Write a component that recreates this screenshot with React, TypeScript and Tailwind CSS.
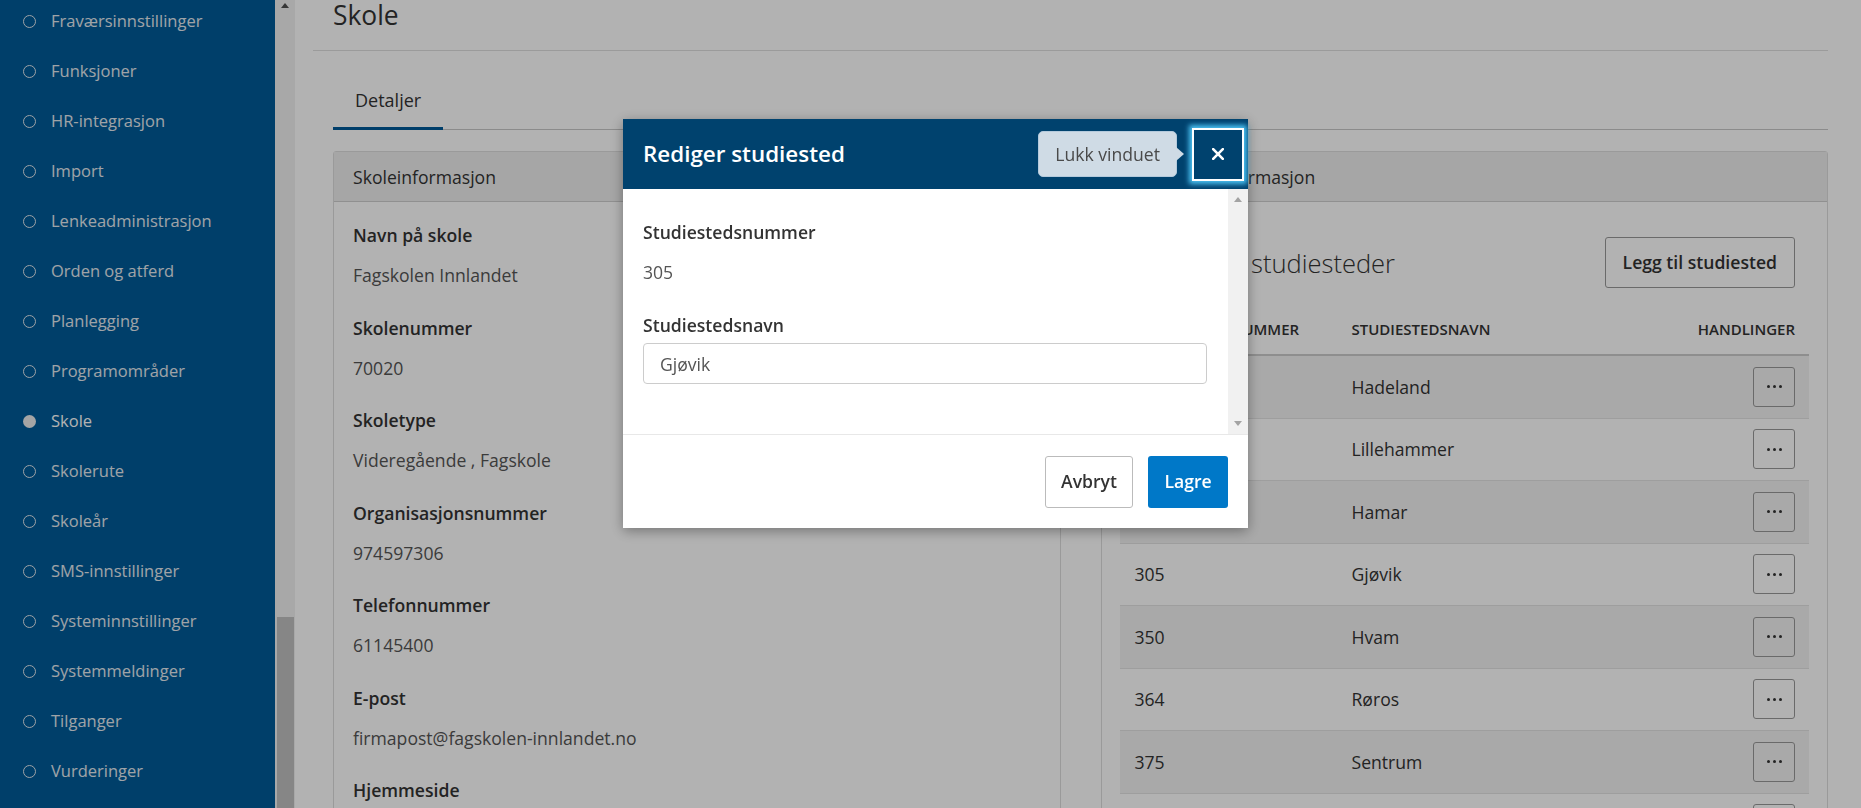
import React from "react";

const menu = [
  "Fraværsinnstillinger",
  "Funksjoner",
  "HR-integrasjon",
  "Import",
  "Lenkeadministrasjon",
  "Orden og atferd",
  "Planlegging",
  "Programområder",
  "Skole",
  "Skolerute",
  "Skoleår",
  "SMS-innstillinger",
  "Systeminnstillinger",
  "Systemmeldinger",
  "Tilganger",
  "Vurderinger",
];

const fields: [string, string][] = [
  ["Navn på skole", "Fagskolen Innlandet"],
  ["Skolenummer", "70020"],
  ["Skoletype", "Videregående , Fagskole"],
  ["Organisasjonsnummer", "974597306"],
  ["Telefonnummer", "61145400"],
  ["E-post", "firmapost@fagskolen-innlandet.no"],
  ["Hjemmeside", "www.fagskolen-innlandet.no"],
];

const rows: [string, string][] = [
  ["301", "Hadeland"],
  ["302", "Lillehammer"],
  ["303", "Hamar"],
  ["305", "Gjøvik"],
  ["350", "Hvam"],
  ["364", "Røros"],
  ["375", "Sentrum"],
  ["380", "Tynset"],
];

function Dots() {
  return (
    <span className="flex items-center gap-[3px]">
      <span className="h-[3px] w-[3px] rounded-full bg-[#333]" />
      <span className="h-[3px] w-[3px] rounded-full bg-[#333]" />
      <span className="h-[3px] w-[3px] rounded-full bg-[#333]" />
    </span>
  );
}

export default function App() {
  return (
    <div className="relative flex h-screen overflow-hidden bg-white font-['Open_Sans',sans-serif] text-[#333]">
      {/* Sidebar */}
      <aside className="flex h-full w-[295px] shrink-0">
        <nav className="mt-[-4px] w-[275px] bg-[#005b99]">
          {menu.map((m) => {
            const active = m === "Skole";
            return (
              <div key={m} className="flex h-[50px] items-center pl-[23px]">
                <span
                  className={
                    active
                      ? "h-[13px] w-[13px] rounded-full bg-[#ececec]"
                      : "h-[13px] w-[13px] rounded-full border-[1.5px] border-[#e4e9ee]"
                  }
                />
                <span
                  className={
                    active
                      ? "ml-[15px] text-[16.5px] leading-[24px] text-white"
                      : "ml-[15px] text-[16.5px] leading-[24px] text-[#e4eaf0]"
                  }
                >
                  {m}
                </span>
              </div>
            );
          })}
        </nav>
        <div className="flex h-full w-[20px] flex-col items-center bg-[#f1f1f1]">
          <span className="mt-[3px] h-0 w-0 border-x-[4px] border-b-[5px] border-x-transparent border-b-[#505050]" />
          <div className="flex-1" />
          <div className="h-[191px] w-[17px] bg-[#c1c1c1]" />
        </div>
      </aside>

      {/* Main */}
      <main className="flex-1 pl-[18px] pr-[33px]">
        <div className="border-b border-[#dedede] pb-[17px] pl-[20px]">
          <h1 className="mt-[-3px] text-[26.4px] font-normal leading-[36px] text-[#333]">Skole</h1>
        </div>
        <div className="pl-[20px]">
          <div className="mt-[37px] flex border-b border-[#c8c8c8]">
            <div className="mb-[-1px] border-b-[3px] border-[#005a99] px-[22px] pb-[15px] text-[18px] leading-[24px] text-[#333]">
              Detaljer
            </div>
          </div>

          <div className="mt-[21px] grid grid-cols-2 gap-[40px]">
            {/* Left card */}
            <section className="rounded-[3px] border border-[#dddddd]">
              <div className="flex h-[50px] items-center border-b border-[#cfcfcf] bg-[#eeeeee] px-[19px] text-[17.6px] leading-[24px] text-[#333]">
                Skoleinformasjon
              </div>
              <div className="px-[19px] pt-[21px]">
                {fields.map(([l, v]) => (
                  <div key={l} className="mb-[28.5px]">
                    <div className="mb-[16px] text-[17.6px] font-semibold leading-[24px] text-[#333]">{l}</div>
                    <div className="text-[17.6px] leading-[24px] text-[#555]">{v}</div>
                  </div>
                ))}
              </div>
            </section>

            {/* Right card */}
            <section className="rounded-[3px] border border-[#dddddd]">
              <div className="flex h-[50px] items-center border-b border-[#cfcfcf] bg-[#eeeeee] px-[19px] text-[17.6px] leading-[24px] text-[#333]">
                Studiestedsinformasjon
              </div>
              <div className="px-[18px] pt-[35px]">
                <div className="flex h-[51px] items-center justify-between">
                  <h2 className="text-[25.5px] font-light leading-[32px] text-[#333]">Registrerte studiesteder</h2>
                  <button className="mr-[14px] h-[51px] rounded-[3px] border border-[#999] px-[17px] text-[17.6px] font-semibold text-[#333]">
                    Legg til studiested
                  </button>
                </div>
                <div className="mt-[16px]">
                  <div className="grid h-[52px] grid-cols-[217px_1fr_auto] items-center border-b-2 border-[#cccccc] text-[15px] font-semibold uppercase text-[#333]">
                    <div className="pl-[15px]">Studiestedsnummer</div>
                    <div className="pl-[15px]">Studiestedsnavn</div>
                    <div className="pr-[14px] text-right">Handlinger</div>
                  </div>
                  {rows.map(([n, name], i) => (
                    <div
                      key={n}
                      className={
                        i % 2 === 0
                          ? "grid h-[62.5px] grid-cols-[217px_1fr_auto] items-center border-b border-[#e2e2e2] bg-[#f2f2f2] text-[17.6px] text-[#333]"
                          : "grid h-[62.5px] grid-cols-[217px_1fr_auto] items-center border-b border-[#e2e2e2] text-[17.6px] text-[#333]"
                      }
                    >
                      <div className="pl-[15px]">{n}</div>
                      <div className="pl-[15px]">{name}</div>
                      <div className="pr-[14px]">
                        <button className="flex h-[40px] w-[42px] items-center justify-center rounded-[3px] border border-[#999]">
                          <Dots />
                        </button>
                      </div>
                    </div>
                  ))}
                </div>
              </div>
            </section>
          </div>
        </div>
      </main>

      {/* Backdrop */}
      <div className="fixed inset-0 bg-black/30" />

      {/* Modal */}
      <div className="fixed inset-0 flex justify-center pt-[119px]">
        <div className="ml-[10px] h-[409px] w-[625px] bg-white shadow-[0_3px_12px_rgba(0,0,0,0.35)]">
          <div className="flex h-[70px] items-center bg-[#00426e] pl-[20px] pr-[4px]">
            <h3 className="flex-1 text-[22.4px] font-semibold leading-[30px] text-white">Rediger studiested</h3>
            <div className="relative mr-[15px] flex h-[46px] items-center rounded-[5px] border border-[#b4cadc] bg-[#cfdbe5] px-[16px] text-[17.6px] text-[#4a4a4a]">
              Lukk vinduet
              <span className="absolute right-[-8px] top-1/2 h-0 w-0 -translate-y-1/2 border-y-[7px] border-l-[8px] border-y-transparent border-l-[#cfdbe5]" />
            </div>
            <button className="flex h-[53px] w-[52px] items-center justify-center border-2 border-white bg-[#00426e] shadow-[0_0_5px_3px_#4cc4f5]">
              <svg width="12" height="12" viewBox="0 0 12 12">
                <path d="M1.2 1.2 L10.8 10.8 M10.8 1.2 L1.2 10.8" stroke="white" strokeWidth="2.6" strokeLinecap="square" />
              </svg>
            </button>
          </div>
          <div className="flex h-[245px]">
            <div className="flex-1 pl-[20px] pr-[21px] pt-[31px]">
              <div className="mb-[16px] text-[17.6px] font-semibold leading-[24px] text-[#333]">Studiestedsnummer</div>
              <div className="mb-[29px] text-[17.6px] leading-[24px] text-[#555]">305</div>
              <div className="mb-[6px] text-[17.6px] font-semibold leading-[24px] text-[#333]">Studiestedsnavn</div>
              <input
                readOnly
                value="Gjøvik"
                className="h-[41px] w-full rounded-[4px] border border-[#cccccc] px-[16px] text-[17.6px] text-[#555] outline-none"
              />
            </div>
            <div className="flex w-[20px] flex-col items-center justify-between bg-[#f1f1f1] py-[8px]">
              <span className="h-0 w-0 border-x-[4px] border-b-[5px] border-x-transparent border-b-[#a3a3a3]" />
              <span className="h-0 w-0 border-x-[4px] border-t-[5px] border-x-transparent border-t-[#a3a3a3]" />
            </div>
          </div>
          <div className="flex h-[94px] items-center justify-end gap-[15px] border-t border-[#e8e8e8] pr-[20px]">
            <button className="h-[52px] w-[88px] rounded-[3px] border border-[#bbbbbb] bg-white text-[17.6px] font-semibold text-[#333]">
              Avbryt
            </button>
            <button className="h-[52px] w-[80px] rounded-[3px] bg-[#0078c8] text-[17.6px] font-semibold text-white">
              Lagre
            </button>
          </div>
        </div>
      </div>
    </div>
  );
}
